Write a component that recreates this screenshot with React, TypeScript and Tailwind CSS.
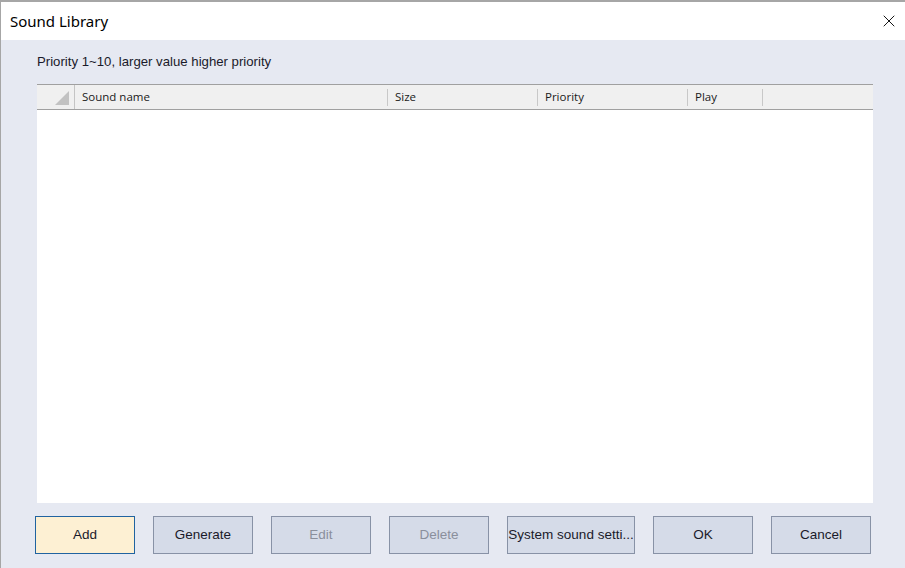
import { X } from "lucide-react";

const columns = [
  { label: "Sound name", width: "w-[313px]" },
  { label: "Size", width: "w-[150px]" },
  { label: "Priority", width: "w-[150px]" },
  { label: "Play", width: "w-[75px]" },
];

const buttons = [
  { label: "Add", width: "w-[100px]", primary: true },
  { label: "Generate", width: "w-[100px]" },
  { label: "Edit", width: "w-[100px]", disabled: true },
  { label: "Delete", width: "w-[100px]", disabled: true },
  { label: "System sound setti...", width: "w-[128px]" },
  { label: "OK", width: "w-[100px]" },
  { label: "Cancel", width: "w-[100px]" },
];

export default function App() {
  return (
    <div className="w-[905px] h-[568px] flex flex-col border-t-2 border-l border-[#a6a6a6] bg-white overflow-hidden">
      {/* Title bar */}
      <div className="h-[38px] flex items-center justify-between pl-[9px] pr-[6px] bg-white">
        <span className="text-[15px] text-black font-['Noto_Sans',sans-serif]">Sound Library</span>
        <X className="w-[20px] h-[20px] text-black" strokeWidth={1.1} />
      </div>

      {/* Body */}
      <div className="flex-1 flex flex-col bg-[#e6e9f2] pl-[36px] pr-[32px] pt-[13px] pb-[14px] font-['Liberation_Sans',sans-serif]">
        <div className="h-[18px] flex items-center text-[13.2px] text-[#1a1a2a]">
          Priority 1~10, larger value higher priority
        </div>

        {/* Table */}
        <div className="mt-[13px] flex-1 flex flex-col bg-white">
          <div className="h-[26px] flex bg-[#f0f0f0] border-t border-b border-[#a0a0a0] text-[11.5px] text-[#1a1a1a] font-['Open_Sans',sans-serif]">
            <div className="w-[38px] border-r border-[#c4c4c4] flex items-end justify-end pr-[5px] pb-[4px]">
              <svg width="14" height="14" viewBox="0 0 14 14">
                <polygon points="14,0 14,14 0,14" fill="#c2c2c2" />
              </svg>
            </div>
            {columns.map((c) => (
              <div key={c.label} className={`${c.width} flex items-center`}>
                <span className="flex-1 pl-[7px]">{c.label}</span>
                <span className="w-px h-[17px] bg-[#c8c8c8]" />
              </div>
            ))}
            <div className="flex-1" />
          </div>
          <div className="flex-1 bg-white" />
        </div>

        {/* Buttons */}
        <div className="mt-[13px] flex gap-[18px] -ml-[2px]">
          {buttons.map((b) => (
            <button
              key={b.label}
              className={`${b.width} h-[38px] flex items-center justify-center pt-px text-[13.5px] border whitespace-nowrap ${
                b.primary
                  ? "bg-[#fdf0d3] border-[#2063a0] text-[#1a1a2a]"
                  : b.disabled
                  ? "bg-[#d5dbe8] border-[#8892a6] text-[#8a8f9c]"
                  : "bg-[#d5dbe8] border-[#8892a6] text-[#1a1a2a]"
              }`}
            >
              {b.label}
            </button>
          ))}
        </div>
      </div>
    </div>
  );
}
